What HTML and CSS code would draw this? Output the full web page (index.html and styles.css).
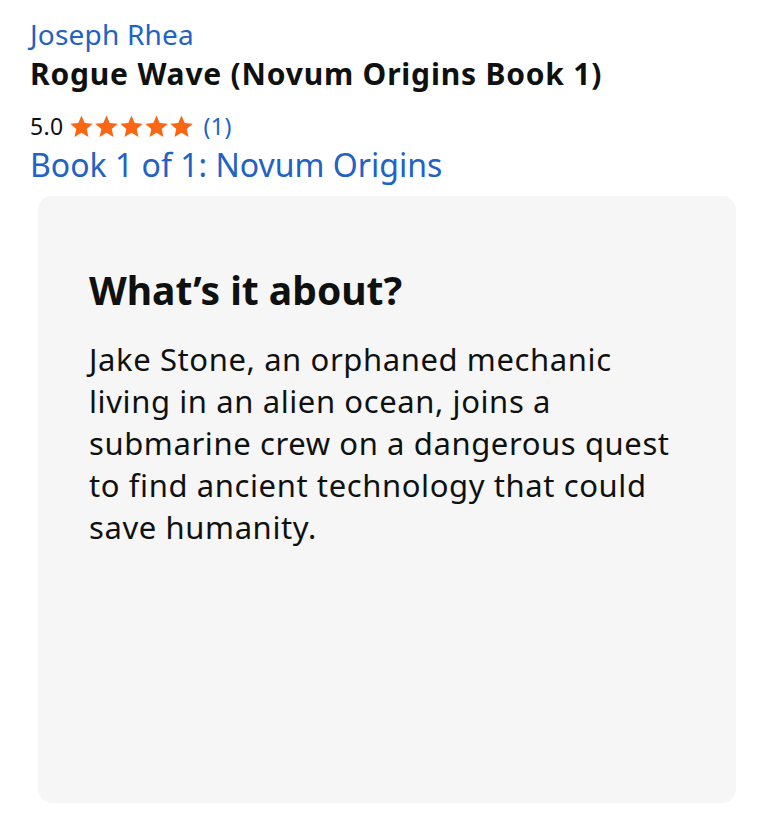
FILE: index.html
```html
<!DOCTYPE html>
<html lang="en">
<head>
  <meta charset="UTF-8">
  <title>Rogue Wave</title>
  <meta name="viewport" content="width=device-width, initial-scale=1">
  <link rel="stylesheet" href="styles.css">
</head>
<body>

  <div class="book-info">
    <a class="author" href="#">Joseph Rhea</a>
    <h1 class="title">Rogue Wave (Novum Origins Book 1)</h1>
    <div class="rating">
      <span class="score">5.0</span>
      <span class="stars">
        <svg viewBox="0 0 24 24"><path d="M12 1.5l3.1 7.1 7.7.7-5.8 5.1 1.7 7.6L12 18l-6.7 4 1.7-7.6-5.8-5.1 7.7-.7z"/></svg>
        <svg viewBox="0 0 24 24"><path d="M12 1.5l3.1 7.1 7.7.7-5.8 5.1 1.7 7.6L12 18l-6.7 4 1.7-7.6-5.8-5.1 7.7-.7z"/></svg>
        <svg viewBox="0 0 24 24"><path d="M12 1.5l3.1 7.1 7.7.7-5.8 5.1 1.7 7.6L12 18l-6.7 4 1.7-7.6-5.8-5.1 7.7-.7z"/></svg>
        <svg viewBox="0 0 24 24"><path d="M12 1.5l3.1 7.1 7.7.7-5.8 5.1 1.7 7.6L12 18l-6.7 4 1.7-7.6-5.8-5.1 7.7-.7z"/></svg>
        <svg viewBox="0 0 24 24"><path d="M12 1.5l3.1 7.1 7.7.7-5.8 5.1 1.7 7.6L12 18l-6.7 4 1.7-7.6-5.8-5.1 7.7-.7z"/></svg>
      </span>
      <a class="count" href="#">(1)</a>
    </div>
    <a class="series" href="#">Book 1 of 1: Novum Origins</a>
  </div>

  <div class="about-card">
    <h2>What’s it about?</h2>
    <p>Jake Stone, an orphaned mechanic living in an alien ocean, joins a submarine crew on a dangerous quest to find ancient technology that could save humanity.</p>
  </div>

</body>
</html>
```

FILE: styles.css
```css
body {
  font-family: "Noto Sans", Arial, sans-serif;
  background: #fff;
  color: #0f1111;
  margin: 0;
}

a {
  text-decoration: none;
  color: #2162c4;
}

.book-info {
  padding: 16px 30px 0;
  display: flex;
  flex-direction: column;
  align-items: flex-start;
}

.author {
  font-size: 28px;
  line-height: 36px;
  letter-spacing: 0.2px;
}

.title {
  font-size: 30px;
  font-weight: 700;
  line-height: 44px;
  letter-spacing: 0.8px;
  margin: 0 0 14px;
}

.rating {
  display: flex;
  align-items: center;
  font-size: 23px;
  line-height: 32px;
}

.score {
  margin-right: 6px;
  letter-spacing: 0.3px;
}

.stars {
  display: flex;
  margin-right: 9px;
}

.stars svg {
  width: 25px;
  height: 25px;
  fill: #fa6714;
}

.count {
  letter-spacing: 0.5px;
}

.series {
  font-size: 32px;
  line-height: 42px;
  margin-top: 2px;
}

.about-card {
  box-sizing: border-box;
  background: #f6f6f6;
  border-radius: 14px;
  margin: 10px 35px 0 38px;
  padding: 70px 51px 0;
  height: 607px;
}

.about-card h2 {
  font-size: 39px;
  font-weight: 700;
  line-height: 48px;
  margin: 0 0 24px;
}

.about-card p {
  font-size: 31px;
  line-height: 42px;
  letter-spacing: 0.6px;
  margin: 0;
}
```
